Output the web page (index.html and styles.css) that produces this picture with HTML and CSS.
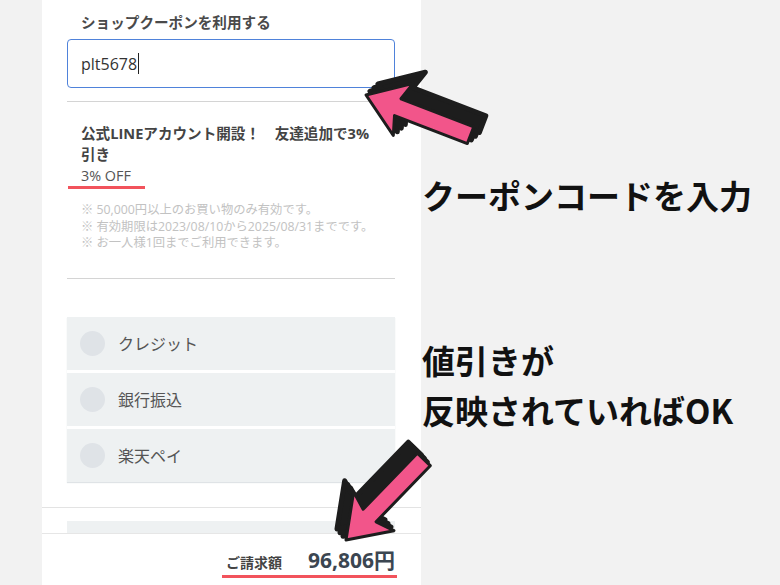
FILE: index.html
```html
<!DOCTYPE html>
<html lang="ja">
<head>
<meta charset="utf-8">
<title>Coupon</title>
<link rel="stylesheet" href="styles.css">
</head>
<body>
<div class="page">
  <div class="gutter"></div>
  <div class="panel">
    <div class="content">
      <div class="label">ショップクーポンを利用する</div>
      <div class="input"><span class="value">plt5678</span><span class="caret"></span></div>
      <div class="rule rule-top"></div>
      <div class="coupon">
        <div class="coupon-title">公式LINEアカウント開設！　友達追加で3%引き</div>
        <div class="coupon-off">3% OFF</div>
      </div>
      <div class="off-bar"></div>
      <ul class="notes">
        <li>※ 50,000円以上のお買い物のみ有効です。</li>
        <li>※ 有効期限は2023/08/10から2025/08/31までです。</li>
        <li>※ お一人様1回までご利用できます。</li>
      </ul>
      <div class="rule rule-bottom"></div>
      <div class="methods">
        <div class="method"><span class="radio"></span><span class="method-name">クレジット</span></div>
        <div class="method"><span class="radio"></span><span class="method-name">銀行振込</span></div>
        <div class="method"><span class="radio"></span><span class="method-name">楽天ペイ</span></div>
      </div>
    </div>
    <div class="divider"></div>
    <div class="peek"></div>
    <div class="totalbar">
      <div class="total">
        <span class="total-label">ご請求額</span>
        <span class="total-amount">96,806円</span>
      </div>
    </div>
  </div>
  <div class="notes-side">
    <div class="callout callout-1">クーポンコードを入力</div>
    <div class="callout callout-2">値引きが<br>反映されていればOK</div>
  </div>
</div>
<svg class="arrows" width="780" height="585" viewBox="0 0 780 585" xmlns="http://www.w3.org/2000/svg">
  <defs>
    <polygon id="arrow" points="0,0 40,-28 34,-9 112,-9 112,9 34,9 40,28"/>
  </defs>
  <g transform="translate(366,95) rotate(21)">
    <g class="shade">
      <use href="#arrow" transform="rotate(-21) translate(4,-3.7) rotate(21)"/>
      <use href="#arrow" transform="rotate(-21) translate(8,-7.3) rotate(21)"/>
      <use href="#arrow" transform="rotate(-21) translate(12,-11) rotate(21)"/>
    </g>
    <use href="#arrow" class="pink"/>
  </g>
  <g transform="translate(346,540) rotate(-46)">
    <g class="shade">
      <use href="#arrow" transform="rotate(46) translate(-3,-3.7) rotate(-46)"/>
      <use href="#arrow" transform="rotate(46) translate(-6,-7.3) rotate(-46)"/>
      <use href="#arrow" transform="rotate(46) translate(-9,-11) rotate(-46)"/>
    </g>
    <use href="#arrow" class="pink"/>
  </g>
</svg>
</body>
</html>
```
FILE: styles.css
```css
* { box-sizing: border-box; }
html, body { margin: 0; padding: 0; }
body {
  width: 780px;
  height: 585px;
  overflow: hidden;
  background: #f2f2f2;
  font-family: "Open Sans", "Noto Sans CJK JP", sans-serif;
  color: #444;
  position: relative;
}
.page { display: flex; height: 585px; }
.gutter { width: 42px; flex: none; }
.panel {
  width: 379px;
  flex: none;
  background: #fff;
  display: flex;
  flex-direction: column;
  height: 585px;
}
.content { padding: 12px 26px 0 25px; }
.label {
  padding: 0 14px;
  font-size: 14.6px;
  line-height: 20px;
  font-weight: 700;
  color: #4a4a4a;
  margin-bottom: 7px;
}
.input {
  height: 49px;
  border: 1.5px solid #4f82da;
  border-radius: 4px;
  padding-left: 13px;
  display: flex;
  align-items: center;
  font-size: 16px;
  color: #333;
}
.caret { width: 1px; height: 21px; background: #222; margin-left: 1px; }
.rule { height: 1px; background: #d4d4d4; }
.rule-top { margin-top: 13px; }
.coupon { padding: 21px 14px 0; }
.coupon-title {
  font-size: 14.6px;
  line-height: 21px;
  font-weight: 700;
  color: #444;
}
.coupon-off { font-size: 14.4px; line-height: 21px; color: #555; }
.off-bar { width: 77px; height: 3px; background: #f2535c; margin: 0 0 0 1px; }
.notes {
  list-style: none;
  margin: 13px 0 0;
  padding: 0 14px;
  font-size: 12.3px;
  line-height: 16.5px;
  color: #c2c2c2;
}
.rule-bottom { margin-top: 26px; }
.methods {
  margin-top: 38px;
  display: flex;
  flex-direction: column;
  gap: 3px;
  box-shadow: 0 1px 1px #dfe3e6;
}
.method {
  height: 53px;
  background: #eef1f2;
  display: flex;
  align-items: center;
  padding-left: 13px;
}
.radio {
  width: 25px;
  height: 25px;
  border-radius: 50%;
  background: #dfe3e7;
  flex: none;
}
.method-name { margin-left: 13px; font-size: 16px; color: #555; }
.divider { height: 1px; background: #e3e3e3; margin-top: 25px; }
.peek { height: 12px; margin: 13px 26px 0 25px; background: #eef1f2; }
.totalbar {
  flex: 1;
  border-top: 1px solid #e6e6e6;
  display: flex;
  justify-content: flex-end;
  align-items: flex-start;
  padding: 12px 24px 0 0;
  background: #fff;
}
.total {
  display: flex;
  align-items: baseline;
  padding: 0 2px 1px 4px;
  border-bottom: 3px solid #f2535c;
}
.total-label { font-size: 14px; font-weight: 700; color: #444; margin-right: 26px; }
.total-amount { font-size: 21px; line-height: 28px; font-weight: 700; color: #3b4651; }
.notes-side { padding-left: 1px; display: flex; flex-direction: column; }
.callout {
  font-family: "Noto Sans CJK JP", sans-serif;
  font-weight: 700;
  color: #111;
  white-space: nowrap;
  font-size: 33px;
}
.callout-1 { margin-top: 175px; line-height: 40px; }
.callout-2 { margin-top: 120px; line-height: 50px; }
.arrows { position: absolute; left: 0; top: 0; pointer-events: none; }
.shade use { fill: #1d1d1d; stroke: #1d1d1d; stroke-width: 5; stroke-linejoin: round; }
.pink { fill: #f2558a; stroke: #1d1d1d; stroke-width: 3; stroke-linejoin: round; }
```
